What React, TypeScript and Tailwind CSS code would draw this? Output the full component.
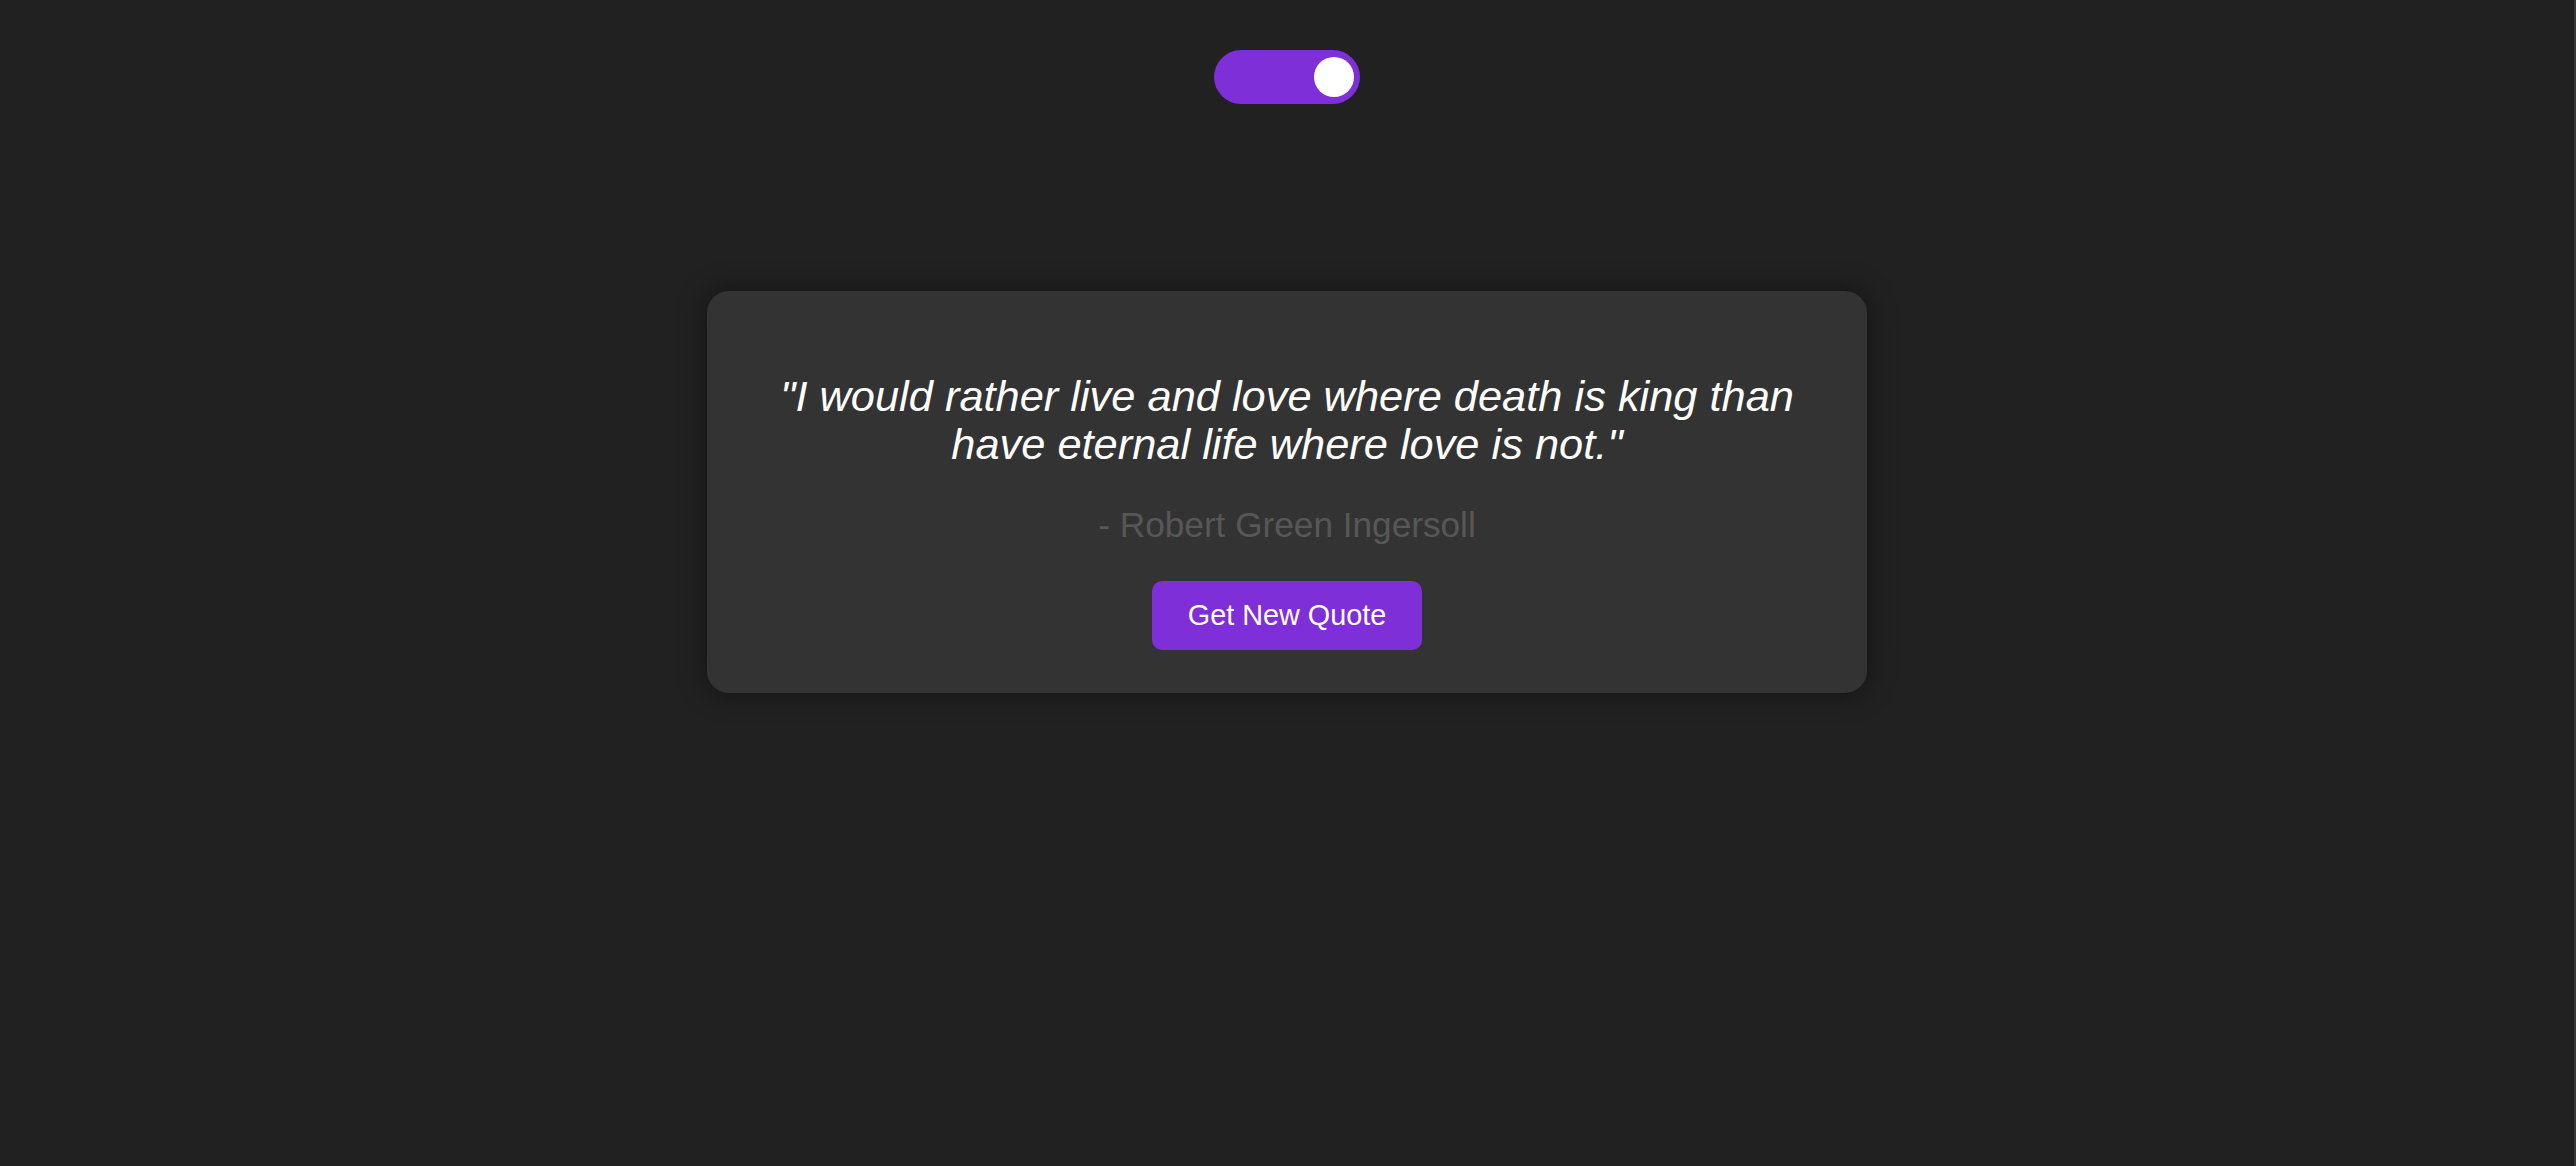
import React, { useState } from 'react';

// --- DATA ---
const quote = {
  text: '"I would rather live and love where death is king than have eternal life where love is not."',
  author: 'Robert Green Ingersoll',
};

export default function App() {
  const [on, setOn] = useState(true);

  return (
    <div
      className="min-h-[1166px] w-full bg-[#212121] flex flex-col items-center pt-[50px] border-r-2 border-[#3a3a3a]"
      style={{ fontFamily: "'Liberation Sans', Arial, sans-serif" }}
    >
      {/* Theme toggle */}
      <button
        onClick={() => setOn(!on)}
        className={`w-[146px] h-[54px] rounded-full flex items-center px-[6px] ${
          on ? 'bg-[#7e2fd8] justify-end' : 'bg-[#555] justify-start'
        }`}
      >
        <span className="block w-[40px] h-[40px] rounded-full bg-white" />
      </button>

      {/* Quote card */}
      <div className="mt-[187px] w-[1160px] bg-[#333333] rounded-[22px] shadow-[0_0_30px_rgba(0,0,0,0.45)] px-[40px] pt-[81px] pb-[43px] flex flex-col items-center text-center">
        <p className="text-white italic text-[43.4px] leading-[48px]">{quote.text}</p>
        <p className="mt-[37px] text-[#575757] text-[35.2px] leading-[40px]">- {quote.author}</p>
        <button className="mt-[36px] bg-[#7e2fd8] text-white text-[28.8px] leading-[33px] px-[36px] py-[18px] rounded-[10px]">
          Get New Quote
        </button>
      </div>
    </div>
  );
}
